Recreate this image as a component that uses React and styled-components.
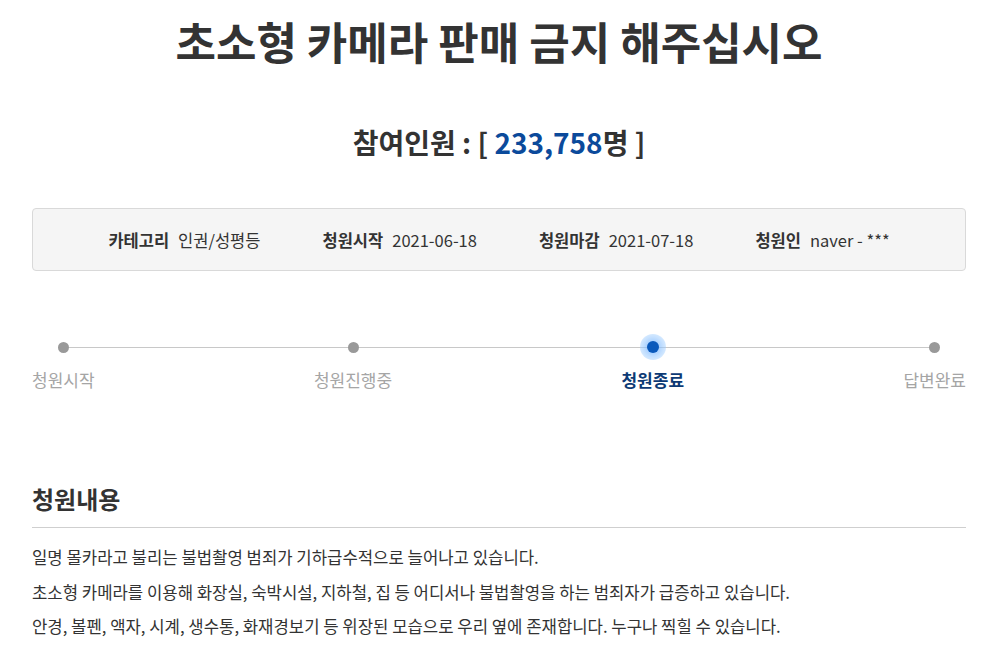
import React from 'react';
import styled, { createGlobalStyle } from 'styled-components';

const GlobalStyle = createGlobalStyle`
    body {
        margin: 0;
        background: #fff;
        font-family: "Noto Sans CJK KR", "Noto Sans", sans-serif;
        color: #333;
    }
`;

const Page = styled.div`
    width: 934px;
    margin: 0 0 0 32px;
    padding-top: 10px;
`;

const Title = styled.h1`
    margin: 0;
    text-align: center;
    font-size: 44px;
    font-weight: 700;
    line-height: 62px;
    color: #333;
`;

const Count = styled.h2`
    margin: 50px 0 0;
    text-align: center;
    font-size: 28px;
    font-weight: 700;
    line-height: 40px;
    color: #333;

    span {
        color: #0b4a9b;
    }
`;

const InfoBox = styled.ul`
    list-style: none;
    margin: 46px 0 0;
    padding: 0;
    box-sizing: border-box;
    height: 63px;
    border: 1px solid #d9d9d9;
    border-radius: 4px;
    background: #f5f5f5;
    display: flex;
    align-items: center;
    justify-content: center;
    gap: 62px;
`;

const InfoItem = styled.li`
    display: flex;
    align-items: center;
    gap: 9px;
    font-size: 16.5px;
    color: #333;

    b {
        font-weight: 700;
    }
`;

const Steps = styled.ol`
    position: relative;
    list-style: none;
    margin: 63px 0 0;
    padding: 0;
    display: flex;
    justify-content: space-between;

    &::before {
        content: '';
        position: absolute;
        left: 31px;
        right: 31px;
        top: 13px;
        height: 1px;
        background: #c8c8c8;
    }
`;

const Step = styled.li`
    position: relative;
    display: flex;
    flex-direction: column;
    align-items: center;
    gap: 8px;
    font-size: 17px;
    line-height: 24px;
    color: ${p => (p.$active ? '#0d3a75' : '#a5a5a5')};
    font-weight: ${p => (p.$active ? 700 : 400)};
    margin-right: ${p => p.$shift || 0}px;
`;

const Dot = styled.span`
    position: relative;
    width: 26px;
    height: 26px;
    display: flex;
    align-items: center;
    justify-content: center;

    &::before {
        content: '';
        position: absolute;
        inset: 0;
        border-radius: 50%;
        background: ${p => (p.$active ? 'radial-gradient(circle, rgba(110,175,255,0.8) 0, rgba(150,200,255,0.55) 55%, rgba(200,228,255,0.3) 100%)' : 'transparent')};
    }

    &::after {
        content: '';
        position: relative;
        width: ${p => (p.$active ? 12 : 11)}px;
        height: ${p => (p.$active ? 12 : 11)}px;
        border-radius: 50%;
        background: ${p => (p.$active ? '#0a59bb' : '#999')};
    }
`;

const Section = styled.section`
    margin-top: 91px;
`;

const SectionTitle = styled.h3`
    margin: 0;
    font-size: 24px;
    font-weight: 700;
    line-height: 32px;
    color: #333;
    padding-bottom: 12px;
    border-bottom: 1px solid #cfcfcf;
`;

const Body = styled.div`
    padding-top: 12px;
    font-size: 16.7px;
    line-height: 34.5px;
    color: #333;

    p {
        margin: 0;
    }
`;

const info = [
    ['카테고리', '인권/성평등'],
    ['청원시작', '2021-06-18'],
    ['청원마감', '2021-07-18'],
    ['청원인', 'naver - ***'],
];

const steps = [
    { label: '청원시작' },
    { label: '청원진행중', shift: 10 },
    { label: '청원종료', active: true },
    { label: '답변완료' },
];

export default function App() {
    return (
        <>
            <GlobalStyle />
            <Page>
                <Title>초소형 카메라 판매 금지 해주십시오</Title>
                <Count>
                    참여인원 : [ <span>233,758</span>명 ]
                </Count>
                <InfoBox>
                    {info.map(([k, v]) => (
                        <InfoItem key={k}>
                            <b>{k}</b>
                            <span>{v}</span>
                        </InfoItem>
                    ))}
                </InfoBox>
                <Steps>
                    {steps.map(s => (
                        <Step key={s.label} $active={s.active} $shift={s.shift}>
                            <Dot $active={s.active} />
                            {s.label}
                        </Step>
                    ))}
                </Steps>
                <Section>
                    <SectionTitle>청원내용</SectionTitle>
                    <Body>
                        <p>일명 몰카라고 불리는 불법촬영 범죄가 기하급수적으로 늘어나고 있습니다.</p>
                        <p>초소형 카메라를 이용해 화장실, 숙박시설, 지하철, 집 등 어디서나 불법촬영을 하는 범죄자가 급증하고 있습니다.</p>
                        <p>안경, 볼펜, 액자, 시계, 생수통, 화재경보기 등 위장된 모습으로 우리 옆에 존재합니다. 누구나 찍힐 수 있습니다.</p>
                    </Body>
                </Section>
            </Page>
        </>
    );
}
